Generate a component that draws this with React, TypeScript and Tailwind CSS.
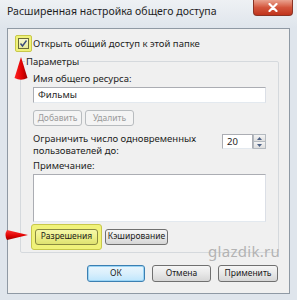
import React from "react";

const font = "font-['Noto_Sans','DejaVu_Sans',sans-serif]";

const WinButton = ({
  text,
  disabled,
  focused,
  highlight,
  className = "",
}: {
  text: string;
  disabled?: boolean;
  focused?: boolean;
  highlight?: boolean;
  className?: string;
}) => {
  let cls =
    "border-[#707070] bg-gradient-to-b from-[#f6f6f6] via-[#e8e8e8] to-[#d6d6d6] text-[#1a1a1a]";
  if (disabled) cls = "border-[#b8bcbf] bg-[#f4f4f4] text-[#9a9a9a]";
  if (focused)
    cls =
      "border-[#3c7fb1] bg-gradient-to-b from-[#eaf6fd] via-[#d9effc] to-[#bee6fd] text-[#1a1a1a] shadow-[inset_0_0_0_1px_#9ad4f5]";
  if (highlight)
    cls =
      "border-[#8a8a40] bg-gradient-to-b from-[#f5f7a8] via-[#eef08a] to-[#dfe270] text-[#1a1a1a]";
  return (
    <div
      className={`flex items-center justify-center whitespace-nowrap rounded-[3px] border text-[8.5px] leading-none ${cls} ${className}`}
    >
      {text}
    </div>
  );
};

const UpArrow = () => (
  <svg width="16" height="26" viewBox="0 0 16 26" className="absolute left-[13px] top-[56px]">
    <defs>
      <linearGradient id="ua" x1="0" x2="1" y1="0" y2="0">
        <stop offset="0" stopColor="#f22" />
        <stop offset="0.6" stopColor="#d00" />
        <stop offset="1" stopColor="#900" />
      </linearGradient>
    </defs>
    <path d="M8 1 L14.5 22 Q8 25.5 1.5 22 Z" fill="url(#ua)" />
  </svg>
);

const RightArrow = () => (
  <svg width="26" height="14" viewBox="0 0 26 14" className="absolute left-[3px] top-[228px]">
    <defs>
      <linearGradient id="ra" x1="0" x2="0" y1="0" y2="1">
        <stop offset="0" stopColor="#f33" />
        <stop offset="0.6" stopColor="#d00" />
        <stop offset="1" stopColor="#900" />
      </linearGradient>
    </defs>
    <path d="M25 7 L4 2 Q1 7 4 12 Z" fill="url(#ra)" />
  </svg>
);

export default function App() {
  return (
    <div className={`relative h-[300px] w-[297px] overflow-hidden bg-[#dfe5ec] ${font}`}>
      {/* title bar */}
      <div className="flex h-[28px] items-start justify-between bg-gradient-to-b from-[#eef1f4] to-[#dfe5ec]">
        <div className="pl-[7px] pt-[6px] text-[10.5px] leading-none text-[#1e1e1e]">
          Расширенная настройка общего доступа
        </div>
        <div className="mr-[4px] flex h-[16px] w-[40px] items-center justify-center rounded-b-[4px] border border-t-0 border-[#8b3324] bg-gradient-to-b from-[#e9a28f] via-[#d3553c] to-[#c0331c]">
          <svg width="10" height="9" viewBox="0 0 10 9">
            <path d="M1.5 1 L8.5 8 M8.5 1 L1.5 8" stroke="#fff" strokeWidth="2.2" strokeLinecap="round" />
          </svg>
        </div>
      </div>

      {/* client area */}
      <div className="ml-[7px] flex h-[266px] w-[283px] flex-col border border-[#8f99a4] bg-[#f0f0f0]">
        {/* share checkbox */}
        <div className="mt-[6px] flex items-center">
          <div className="ml-[7px] flex h-[17px] w-[17px] items-center justify-center rounded-[2px] border border-[#c8c84a] bg-[#f0f27a]">
            <div className="flex h-[11px] w-[11px] items-center justify-center border border-[#6b6b3a] bg-gradient-to-b from-[#f8f8d0] to-[#e8ea9a]">
              <svg width="9" height="9" viewBox="0 0 9 9">
                <path d="M1.5 4.5 L3.5 7 L7.5 1.5" stroke="#3b4c7a" strokeWidth="1.4" fill="none" />
              </svg>
            </div>
          </div>
          <span className="ml-[1px] text-[9.5px] leading-none text-[#1e1e1e]">
            Открыть общий доступ к этой папке
          </span>
        </div>

        {/* Параметры group */}
        <fieldset className="ml-[12px] mt-[5px] h-[196px] w-[258px] rounded-[2px] border border-[#d5d9dd] px-[12px]">
          <legend className="ml-[-8px] px-[1px] text-[9.5px] leading-none text-[#1e1e1e]">Параметры</legend>
          <div className="mt-[7px] text-[9.5px] leading-none text-[#1e1e1e]">Имя общего ресурса:</div>
          <div className="mt-[4px] flex h-[16px] w-[233px] items-center border border-[#abadb3] border-b-[#e3e9ef] border-r-[#dbdfe6] bg-white pl-[4px] text-[9.5px] leading-none text-[#1e1e1e]">
            Фильмы
          </div>
          <div className="mt-[7px] flex gap-[3px]">
            <WinButton text="Добавить" disabled className="h-[16px] w-[49px]" />
            <WinButton text="Удалить" disabled className="h-[16px] w-[49px]" />
          </div>
          <div className="mt-[7px] flex items-start justify-between">
            <div className="text-[9.5px] leading-[12px] text-[#1e1e1e]">
              <div>Ограничить число одновременных</div>
              <div>пользователей до:</div>
            </div>
            <div className="mt-[1px] flex">
              <div className="flex h-[15px] w-[31px] items-center border border-[#abadb3] border-b-[#e3e9ef] bg-white pl-[4px] text-[9.5px] leading-none text-[#1e1e1e]">
                20
              </div>
              <div className="flex h-[15px] w-[13px] flex-col">
                <div className="flex flex-1 items-center justify-center border border-[#b4bac0] bg-gradient-to-b from-[#f4f4f4] to-[#dedede]">
                  <svg width="5" height="3" viewBox="0 0 5 3">
                    <path d="M0 3 L2.5 0 L5 3 Z" fill="#4d6185" />
                  </svg>
                </div>
                <div className="flex flex-1 items-center justify-center border border-t-0 border-[#b4bac0] bg-gradient-to-b from-[#f4f4f4] to-[#dedede]">
                  <svg width="5" height="3" viewBox="0 0 5 3">
                    <path d="M0 0 L2.5 3 L5 0 Z" fill="#4d6185" />
                  </svg>
                </div>
              </div>
            </div>
          </div>
          <div className="mt-[4px] text-[9.5px] leading-none text-[#1e1e1e]">Примечание:</div>
          <div className="mt-[3px] h-[48px] w-[233px] border border-[#abadb3] border-b-[#e3e9ef] border-r-[#dbdfe6] bg-white" />
          <div className="mt-[2px] flex items-center">
            <div className="ml-[-2px] rounded-[3px] border border-[#c8c84a] bg-[#f0f27a] px-[3px] py-[4px]">
              <WinButton text="Разрешения" highlight className="h-[16px] w-[63px]" />
            </div>
            <WinButton text="Кэширование" className="ml-[3px] h-[16px] w-[63px]" />
          </div>
        </fieldset>

        {/* dialog buttons */}
        <div className="mt-[12px] flex justify-end gap-[7px] pr-[11px]">
          <WinButton text="ОК" focused className="h-[17px] w-[58px]" />
          <WinButton text="Отмена" className="h-[17px] w-[59px]" />
          <WinButton text="Применить" className="h-[17px] w-[60px]" />
        </div>
      </div>

      {/* overlays */}
      <UpArrow />
      <RightArrow />
      <div className="absolute left-[208px] top-[244px] text-[15px] leading-none tracking-[0.3px] text-[#b3b3b3]">
        glazdik.ru
      </div>
    </div>
  );
}
